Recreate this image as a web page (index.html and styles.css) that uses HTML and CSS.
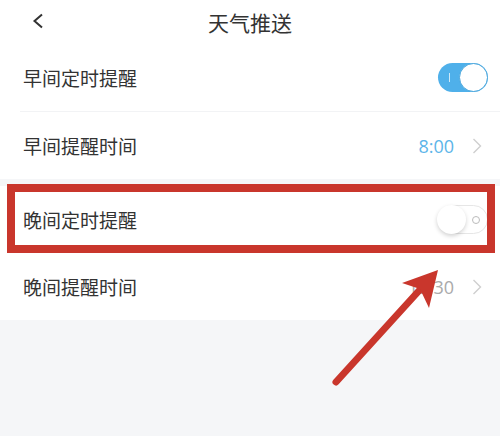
FILE: index.html
```html
<!DOCTYPE html>
<html>
<head>
<meta charset="utf-8">
<link rel="stylesheet" href="styles.css">
</head>
<body>
<div class="page">
  <header class="header">
    <svg class="back" width="12" height="16" viewBox="0 0 12 16"><path d="M10 1.5 L2.5 8 L10 14.5" fill="none" stroke="#333" stroke-width="2"/></svg>
    <div class="title">天气推送</div>
  </header>
  <div class="group">
    <div class="row">
      <span class="label">早间定时提醒</span>
      <span class="toggle on"><span class="mark"></span><span class="knob"></span></span>
    </div>
    <div class="sep"></div>
    <div class="row">
      <span class="label">早间提醒时间</span>
      <span class="value blue">8:00</span>
      <svg class="chev" width="10" height="16" viewBox="0 0 10 16"><path d="M1.5 1 L8.5 8 L1.5 15" fill="none" stroke="#cfcfcf" stroke-width="1.4"/></svg>
    </div>
  </div>
  <div class="gap"></div>
  <div class="group">
    <div class="row">
      <span class="label">晚间定时提醒</span>
      <span class="toggle off"><span class="knob"></span><span class="ring"></span></span>
    </div>
    <div class="row">
      <span class="label">晚间提醒时间</span>
      <span class="value gray">12:30</span>
      <svg class="chev" width="10" height="16" viewBox="0 0 10 16"><path d="M1.5 1 L8.5 8 L1.5 15" fill="none" stroke="#cfcfcf" stroke-width="1.4"/></svg>
    </div>
  </div>
  <div class="rest"></div>
  <div class="highlight"></div>
  <svg class="arrow" width="500" height="436" viewBox="0 0 500 436">
    <line x1="336" y1="382" x2="426" y2="283" stroke="#c9362c" stroke-width="7" stroke-linecap="round"/>
    <polygon points="438,270 402,283 420,289 429,308" fill="#c9362c"/>
  </svg>
</div>
</body>
</html>
```
FILE: styles.css
```css
html, body {
  margin: 0;
  padding: 0;
  background: #f5f6f8;
}
.page {
  width: 500px;
  height: 436px;
  position: relative;
  overflow: hidden;
  font-family: "Noto Sans CJK SC", "Noto Sans", sans-serif;
  color: #333;
  background: #f5f6f8;
}
.header {
  height: 44px;
  background: #fff;
  display: flex;
  align-items: center;
  justify-content: center;
  position: relative;
}
.back {
  position: absolute;
  left: 32px;
  top: 13px;
}
.title {
  font-size: 21px;
  line-height: 24px;
  color: #333;
}
.group {
  background: #fff;
}
.row {
  height: 67px;
  display: flex;
  align-items: center;
  padding: 0 18px 0 23px;
}
.label {
  font-size: 19px;
  flex: 1;
  color: #333;
}
.sep {
  height: 1px;
  background: #f2f3f5;
  margin-left: 20px;
}
.gap {
  height: 7px;
}
.rest {
  height: 120px;
}
.value {
  font-family: "Open Sans", "Noto Sans", sans-serif;
  font-size: 18px;
  margin-right: 18px;
}
.value.blue { color: #5cb5e9; }
.value.gray { color: #aaa; }
.chev {
  display: block;
}
.toggle {
  width: 50px;
  height: 29px;
  border-radius: 15px;
  position: relative;
  box-sizing: border-box;
  margin-right: -6px;
}
.toggle.on {
  background: #4fb0ea;
}
.toggle.on .knob {
  position: absolute;
  right: 0;
  top: 0;
  width: 29px;
  height: 29px;
  border-radius: 50%;
  background: #fff;
  box-sizing: border-box;
  border: 1.5px solid #4aa6dc;
}
.toggle.on .mark {
  position: absolute;
  left: 11px;
  top: 10px;
  width: 1px;
  height: 9px;
  background: #cfe9f8;
}
.toggle.off {
  background: #fff;
  border: 1px solid #e6e6e6;
}
.toggle.off .knob {
  position: absolute;
  left: -2px;
  top: -1px;
  width: 29px;
  height: 29px;
  border-radius: 50%;
  background: #fff;
  box-shadow: 0 2px 4px rgba(0,0,0,0.18);
}
.toggle.off .ring {
  position: absolute;
  right: 7px;
  top: 10px;
  width: 8px;
  height: 8px;
  border-radius: 50%;
  border: 1.3px solid #bbb;
  box-sizing: border-box;
}
.highlight {
  position: absolute;
  left: 7px;
  top: 184px;
  width: 488px;
  height: 69px;
  box-sizing: border-box;
  border: 8px solid #c9362c;
}
.arrow {
  position: absolute;
  left: 0;
  top: 0;
}
```
